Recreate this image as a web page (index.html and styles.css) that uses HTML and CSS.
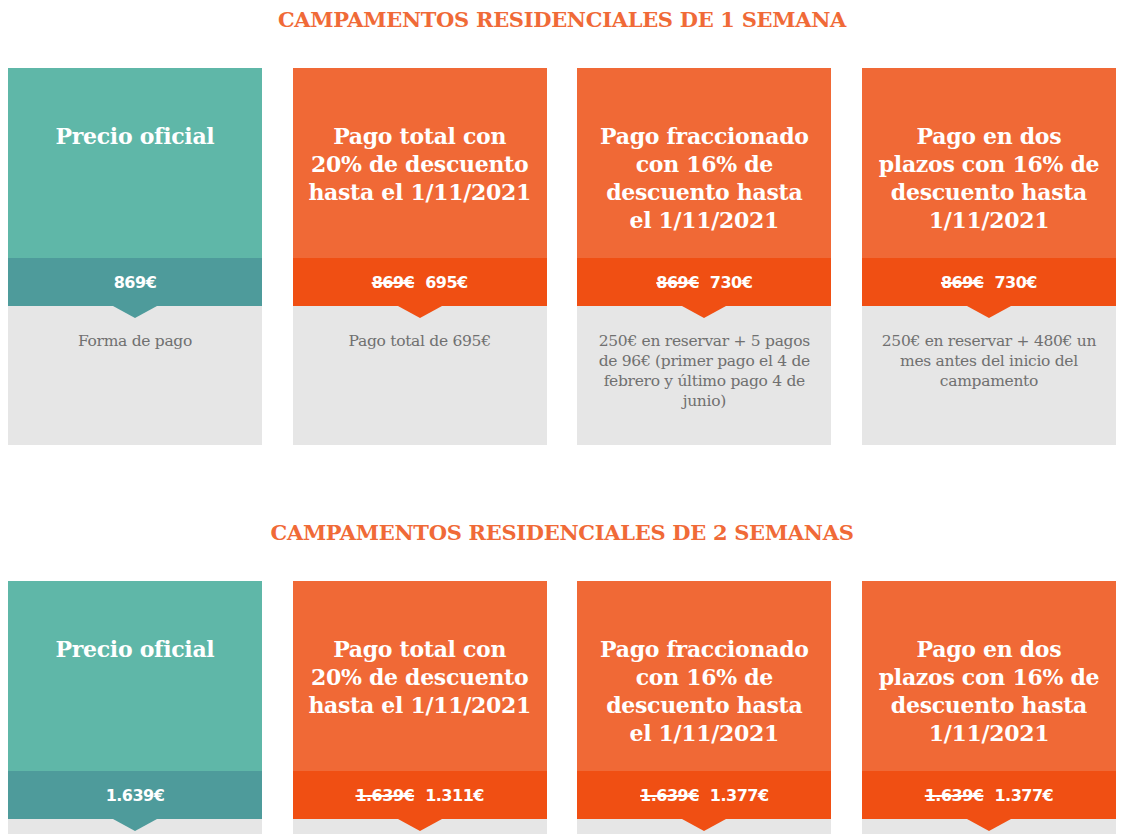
FILE: index.html
```html
<!DOCTYPE html>
<html lang="es">
<head>
<meta charset="utf-8">
<title>Campamentos</title>
<link rel="stylesheet" href="styles.css">
</head>
<body>
<section class="section">
  <h2 class="section-title">CAMPAMENTOS RESIDENCIALES DE 1 SEMANA</h2>
  <div class="cards">
    <div class="card teal">
      <div class="card-head"><h3>Precio oficial</h3></div>
      <div class="card-price"><span class="new">869€</span></div>
      <div class="card-body">Forma de pago</div>
    </div>
    <div class="card orange">
      <div class="card-head"><h3>Pago total con 20% de descuento hasta el 1/11/2021</h3></div>
      <div class="card-price"><s class="old">869€</s><span class="new">695€</span></div>
      <div class="card-body">Pago total de 695€</div>
    </div>
    <div class="card orange">
      <div class="card-head"><h3>Pago fraccionado con 16% de descuento hasta el 1/11/2021</h3></div>
      <div class="card-price"><s class="old">869€</s><span class="new">730€</span></div>
      <div class="card-body">250€ en reservar + 5 pagos de 96€ (primer pago el 4 de febrero y último pago 4 de junio)</div>
    </div>
    <div class="card orange">
      <div class="card-head"><h3>Pago en dos plazos con 16% de descuento hasta 1/11/2021</h3></div>
      <div class="card-price"><s class="old">869€</s><span class="new">730€</span></div>
      <div class="card-body">250€ en reservar + 480€ un mes antes del inicio del campamento</div>
    </div>
  </div>
</section>
<section class="section">
  <h2 class="section-title">CAMPAMENTOS RESIDENCIALES DE 2 SEMANAS</h2>
  <div class="cards">
    <div class="card teal">
      <div class="card-head"><h3>Precio oficial</h3></div>
      <div class="card-price"><span class="new">1.639€</span></div>
      <div class="card-body"></div>
    </div>
    <div class="card orange">
      <div class="card-head"><h3>Pago total con 20% de descuento hasta el 1/11/2021</h3></div>
      <div class="card-price"><s class="old">1.639€</s><span class="new">1.311€</span></div>
      <div class="card-body"></div>
    </div>
    <div class="card orange">
      <div class="card-head"><h3>Pago fraccionado con 16% de descuento hasta el 1/11/2021</h3></div>
      <div class="card-price"><s class="old">1.639€</s><span class="new">1.377€</span></div>
      <div class="card-body"></div>
    </div>
    <div class="card orange">
      <div class="card-head"><h3>Pago en dos plazos con 16% de descuento hasta 1/11/2021</h3></div>
      <div class="card-price"><s class="old">1.639€</s><span class="new">1.377€</span></div>
      <div class="card-body"></div>
    </div>
  </div>
</section>
</body>
</html>
```
FILE: styles.css
```css
html, body {
  margin: 0;
  padding: 0;
  background: #ffffff;
}
body {
  margin: 8px;
  font-family: "DejaVu Serif", serif;
}
.section {
  margin-bottom: 76px;
}
.section-title {
  margin: 0 0 36px;
  height: 24px;
  line-height: 24px;
  text-align: center;
  font-family: "DejaVu Serif", serif;
  font-weight: bold;
  font-size: 21px;
  letter-spacing: -0.3px;
  color: #f06a37;
}
.cards {
  display: flex;
  justify-content: space-between;
}
.card {
  width: 254px;
  display: flex;
  flex-direction: column;
}
.card-head {
  height: 190px;
  box-sizing: border-box;
  padding: 54px 15px 0;
  text-align: center;
}
.card-head h3 {
  margin: 0;
  color: #ffffff;
  font-family: "DejaVu Serif", serif;
  font-weight: bold;
  font-size: 22px;
  line-height: 28px;
  letter-spacing: -0.3px;
}
.card-price {
  position: relative;
  height: 48px;
  display: flex;
  align-items: center;
  justify-content: center;
  gap: 11px;
  color: #ffffff;
  font-family: "DejaVu Sans", sans-serif;
  font-weight: bold;
  font-size: 16px;
  letter-spacing: -0.5px;
}
.card-price::after {
  content: "";
  position: absolute;
  left: 50%;
  top: 100%;
  margin-left: -22px;
  border-left: 22px solid transparent;
  border-right: 22px solid transparent;
  border-top: 12px solid;
  border-top-color: inherit;
}
.card-price .old {
  text-decoration: line-through;
  text-decoration-thickness: 2px;
}
.card-body {
  height: 139px;
  box-sizing: border-box;
  padding: 25px 12px 0;
  background: #e6e6e6;
  text-align: center;
  color: #707070;
  font-family: "DejaVu Serif", serif;
  font-size: 15.5px;
  line-height: 20px;
  letter-spacing: -0.3px;
}
.teal .card-head { background: #5fb7a8; }
.teal .card-price { background: #4e9b9b; border-top-color: #4e9b9b; }
.orange .card-head { background: #f06936; }
.orange .card-price { background: #f04f13; border-top-color: #f04f13; }
```
